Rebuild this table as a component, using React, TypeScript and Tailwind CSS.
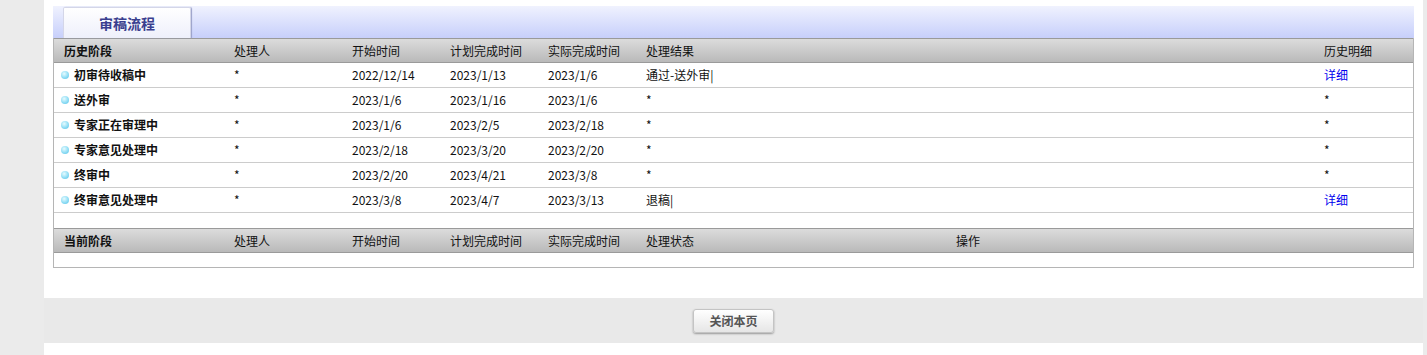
import React from "react";

const font = { fontFamily: '"Microsoft YaHei", "Noto Sans CJK SC", "Noto Sans", sans-serif' };

type Row = {
  stage: string;
  handler: string;
  start: string;
  plan: string;
  actual: string;
  result: string;
  detail: string;
};

const history: Row[] = [
  { stage: "初审待收稿中", handler: "*", start: "2022/12/14", plan: "2023/1/13", actual: "2023/1/6", result: "通过-送外审|", detail: "详细" },
  { stage: "送外审", handler: "*", start: "2023/1/6", plan: "2023/1/16", actual: "2023/1/6", result: "*", detail: "*" },
  { stage: "专家正在审理中", handler: "*", start: "2023/1/6", plan: "2023/2/5", actual: "2023/2/18", result: "*", detail: "*" },
  { stage: "专家意见处理中", handler: "*", start: "2023/2/18", plan: "2023/3/20", actual: "2023/2/20", result: "*", detail: "*" },
  { stage: "终审中", handler: "*", start: "2023/2/20", plan: "2023/4/21", actual: "2023/3/8", result: "*", detail: "*" },
  { stage: "终审意见处理中", handler: "*", start: "2023/3/8", plan: "2023/4/7", actual: "2023/3/13", result: "退稿|", detail: "详细" },
];

const cols = "grid grid-cols-[180px_118px_98px_98px_98px_678px_1fr]";

function Bullet() {
  return (
    <span className="mr-[5px] inline-block h-[8px] w-[8px] rounded-full bg-[radial-gradient(circle_at_40%_35%,#e8fbff_0%,#9fe3f7_45%,#4fc0e8_100%)]" />
  );
}

function HeadRow({ cells }: { cells: string[] }) {
  return (
    <div
      className={`${cols} h-[25px] items-center border-y border-[#9a9a9a] bg-gradient-to-b from-[#dcdcdc] to-[#b9b9b9] text-[12px] text-[#111]`}
    >
      {cells.map((c, i) => (
        <div key={i} className={i === 0 ? "pl-[10px] font-bold" : ""}>
          {c}
        </div>
      ))}
    </div>
  );
}

export default function App() {
  return (
    <div className="flex h-[355px] w-[1427px] bg-[#ebebeb]" style={font}>
      <div className="ml-[44px] flex w-[1379px] flex-col bg-white">
        <div className="px-[9px] pt-[6px]">
          {/* tab strip */}
          <div className="flex h-[32px] items-end bg-gradient-to-b from-[#f0f2fe] to-[#c7cffb] pl-[10px]">
            <div className="flex h-[31px] w-[128px] items-center justify-center rounded-t-[2px] border border-b-0 border-[#d4d6e8] bg-gradient-to-b from-white to-[#eef0fb] text-[14px] font-bold text-[#3a3f8f] shadow-[1px_0_1px_#9aa0c8]">
              审稿流程
            </div>
          </div>

          {/* process table */}
          <div className="border-x border-b border-[#b5b5b5]">
            <HeadRow cells={["历史阶段", "处理人", "开始时间", "计划完成时间", "实际完成时间", "处理结果", "历史明细"]} />
            {history.map((r, i) => (
              <div key={i} className={`${cols} h-[25px] items-center border-b border-[#cccccc] text-[12px] text-[#111]`}>
                <div className="flex items-center pl-[7px] font-bold">
                  <Bullet />
                  {r.stage}
                </div>
                <div>{r.handler}</div>
                <div>{r.start}</div>
                <div>{r.plan}</div>
                <div>{r.actual}</div>
                <div>{r.result}</div>
                <div className={r.detail === "详细" ? "text-[#0000ee]" : ""}>{r.detail}</div>
              </div>
            ))}
            <div className="h-[15px]" />
            <div className="grid h-[25px] grid-cols-[180px_118px_98px_98px_98px_310px_1fr] items-center border-y border-[#9a9a9a] bg-gradient-to-b from-[#dcdcdc] to-[#b9b9b9] text-[12px] text-[#111]">
              <div className="pl-[10px] font-bold">当前阶段</div>
              <div>处理人</div>
              <div>开始时间</div>
              <div>计划完成时间</div>
              <div>实际完成时间</div>
              <div>处理状态</div>
              <div>操作</div>
            </div>
            <div className="h-[14px]" />
          </div>
        </div>

        {/* footer */}
        <div className="mt-[30px] flex h-[45px] items-center justify-center bg-[#e9e9e9]">
          <button className="h-[24px] w-[81px] rounded-[3px] border border-[#c4c4c4] bg-gradient-to-b from-white to-[#e6e6e6] text-[12px] font-bold text-[#555] shadow-[0_1px_2px_#999]">
            关闭本页
          </button>
        </div>
      </div>
    </div>
  );
}
